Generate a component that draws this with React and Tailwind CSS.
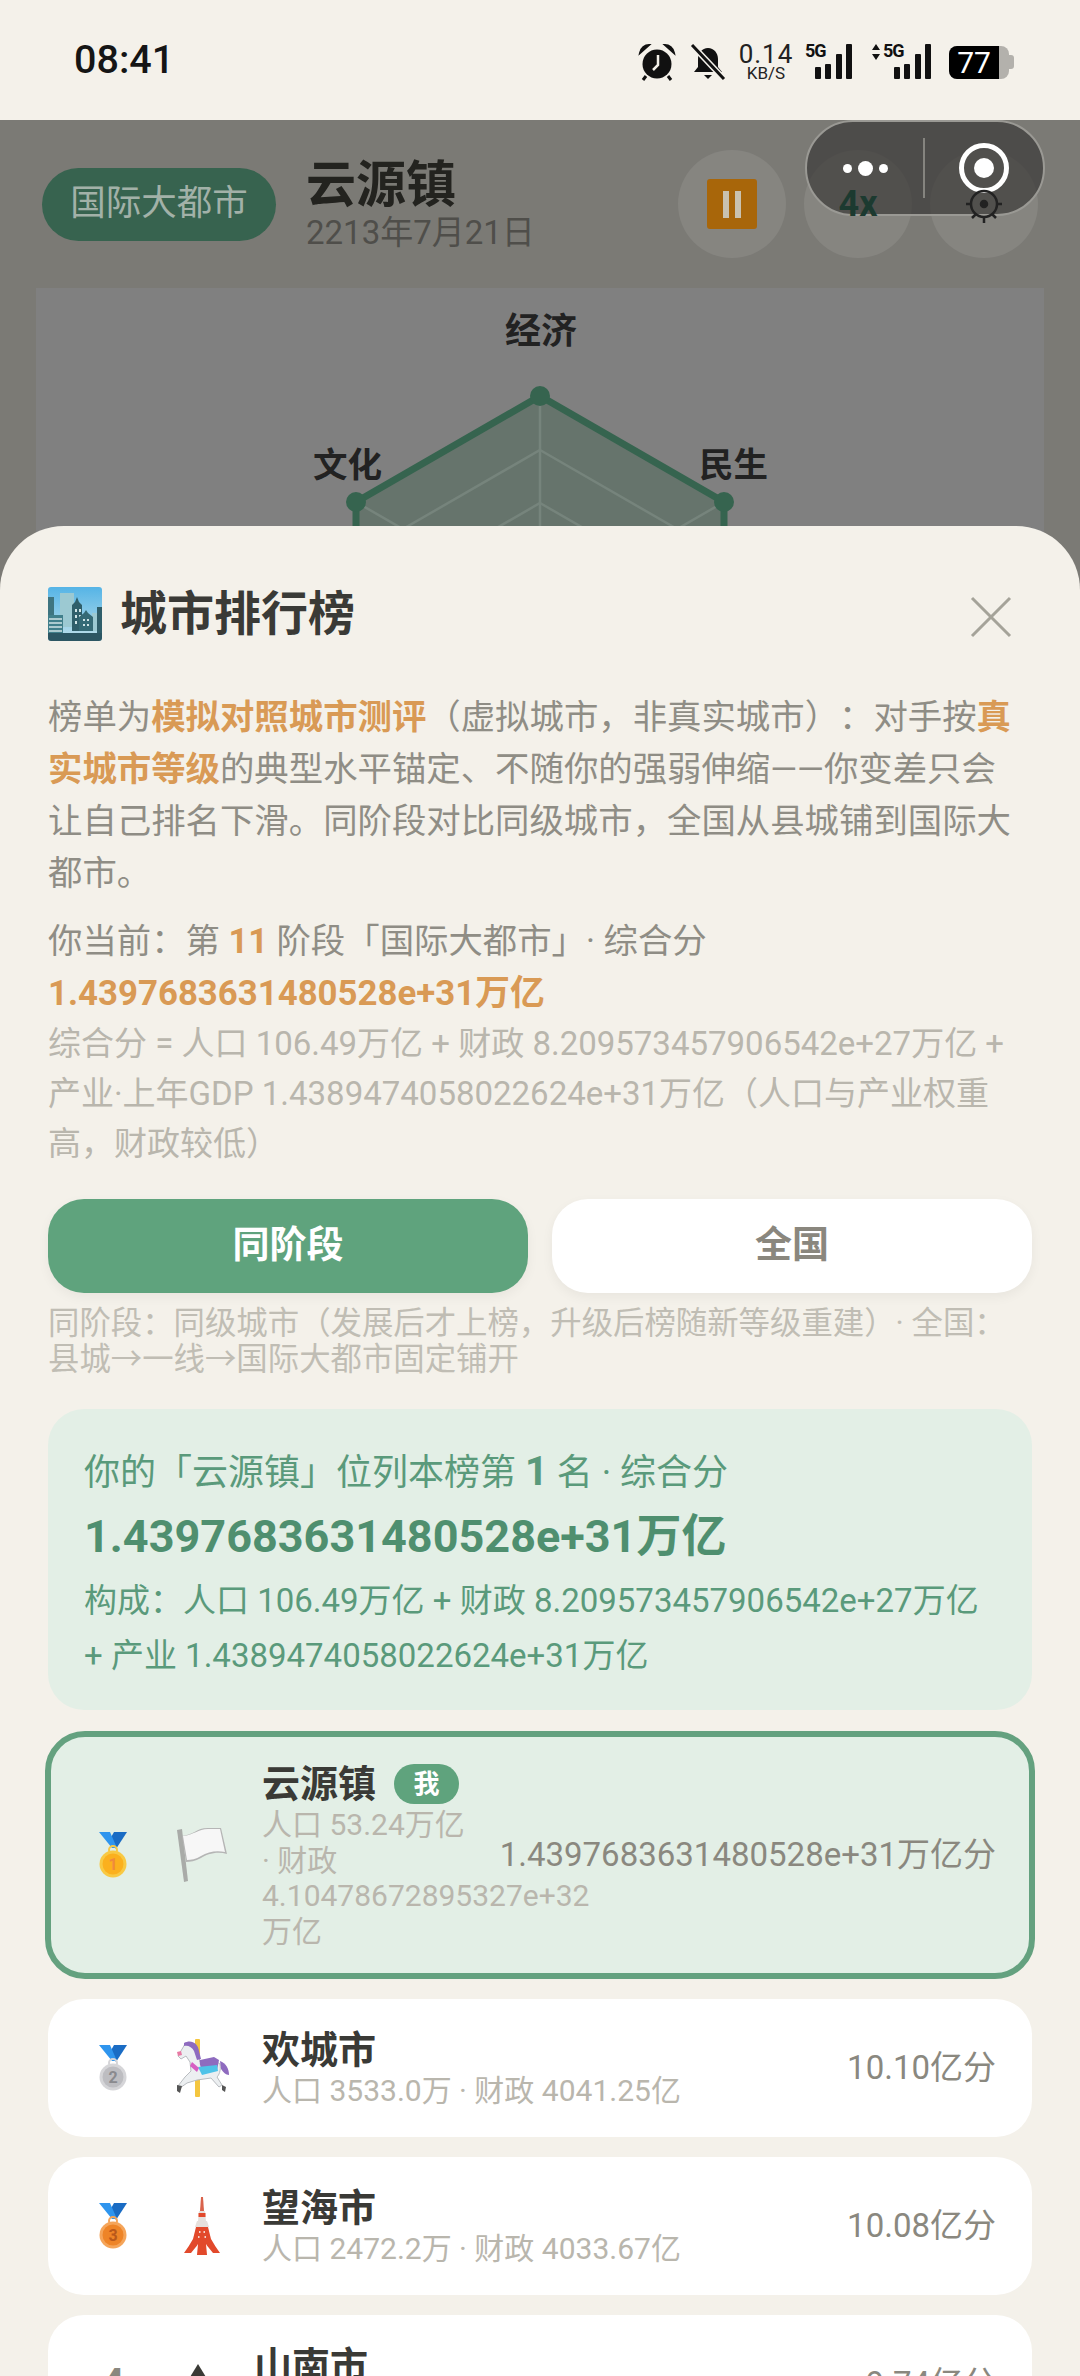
import React from 'react';

function Medal({ n, fill, edge, ink }) {
    return (
        <svg width="28" height="46" viewBox="0 0 28 46">
            <path d="M28 0H15l-4 7 6 10z" fill="#1a6cc4" />
            <path d="M0 0h11l7 16h-5z" fill="#2f95ee" />
            <circle cx="14" cy="18" r="4" fill="none" stroke={edge} strokeWidth="2" />
            <circle cx="14" cy="32" r="13.5" fill={edge} />
            <circle cx="14" cy="32" r="10.5" fill={fill} />
            <text x="14" y="38" textAnchor="middle" fontSize="16" fontWeight="700" fill={ink} fontFamily="Roboto">{n}</text>
        </svg>
    );
}

function FlagIcon() {
    return (
        <svg width="52" height="56" viewBox="0 0 52 56">
            <path d="M1 3l5-1 6 52-4 1z" fill="#a9aba8" />
            <path d="M6 9c12-1 14-8 26-8 6 0 10 0 13 0l6 26c-10-3-20 0-26 4-6 3-11 4-15 4z" fill="#b5b5b5" />
            <path d="M7 9c11-1 15-7 25-7 5 0 9 0 12 0l5 23c-9-2-17 0-24 4-5 3-10 4-14 4z" fill="#f7f7f7" />
        </svg>
    );
}

function HorseIcon() {
    return (
        <svg width="56" height="58" viewBox="0 0 56 58">
            <rect x="21" y="0" width="5" height="58" rx="1" fill="#f4c63f" />
            <path d="M11 5c6-2 12 2 13 9l2 9 14-2 6 4c1 7-1 11-3 13l5 8-3 2-8-9-14 2-10 3-7 5-2-2 7-9 6-6-1-9-4-6-5 3-3-3z" fill="#eceff1" stroke="#b9bcc0" strokeWidth="1" />
            <path d="M10 4c7-4 14 0 15 8l2 8-4 1-3-9c-2-4-6-6-10-5z" fill="#8e6bbf" />
            <path d="M26 21l14-3 5 3-2 10-13 2c-3-3-5-8-4-12z" fill="#8e6bbf" />
            <path d="M24 28l19-2 1 6-16 4z" fill="#4fc3e8" />
            <path d="M18 23l7 6-2 4-7-6z" fill="#d65fc2" />
            <path d="M46 22c6 2 9 8 9 14-3 0-6-3-8-6z" fill="#8e6bbf" />
            <path d="M3 46l5 1-2 7-3-2zM48 46l4 2-1 5-3-2z" fill="#555" />
            <path d="M3 13l4-1 1 4-4 1z" fill="#e87aa4" />
        </svg>
    );
}

function TowerIcon() {
    return (
        <svg width="36" height="58" viewBox="0 0 36 58">
            <path d="M17 0h2l1 14h-4z" fill="#d9634c" />
            <path d="M15 14h6l1 10h-8z" fill="#e6e0dc" />
            <path d="M14.500 16h7v4h-7z" fill="#e2492b" />
            <path d="M13 24h10l2 6H11z" fill="#e6e0dc" />
            <path d="M12 30h12l3 12c3 5 6 10 9 14h-7c-3-4-6-7-7-9h-8c-1 2-4 5-7 9H0c3-4 6-9 9-14z" fill="#e2492b" />
            <path d="M14 47h8l1 11h-10z" fill="#e2492b" />
            <path d="M15 34h1.500v2H15zM19.500 34H21v2h-1.500zM14 39h1.500v2H14zM20.500 39H22v2h-1.500z" fill="#f4d5cc" />
        </svg>
    );
}

function CityIcon() {
    return (
        <svg width="54" height="54" viewBox="0 0 54 54">
            <defs>
                <linearGradient id="sky" x1="0" y1="0" x2="0" y2="1">
                    <stop offset="0" stopColor="#55b4e6" />
                    <stop offset="1" stopColor="#bfe0ea" />
                </linearGradient>
            </defs>
            <rect width="54" height="54" rx="3" fill="url(#sky)" />
            <rect x="12" y="6" width="14" height="34" fill="#9cc9d2" />
            <rect x="44" y="26" width="6" height="18" fill="#9cc9d2" />
            <path d="M0 10h6v18H0z" fill="#3e7480" />
            <path d="M0 28h15v22H0z" fill="#417f8b" />
            <path d="M1 32h13M1 36h13M1 40h13M1 44h13" stroke="#cfe3e6" strokeWidth="1.500" />
            <path d="M24 44V18l3-3 2-5 2 5 3 3v26z" fill="#2f5e6a" />
            <path d="M27 22h2v3h-2zM31 22h2v3h-2zM27 28h2v3h-2zM31 28h2v3h-2zM27 34h2v3h-2zM31 34h2v3h-2z" fill="#cfe3e6" />
            <path d="M31 44V30l5-4 2-3 2 3 5 4v14z" fill="#356a76" />
            <path d="M35 32h2v2h-2zM39 32h2v2h-2zM35 37h2v2h-2zM39 37h2v2h-2z" fill="#cfe3e6" />
            <rect x="49" y="20" width="5" height="30" fill="#2f5e6a" />
            <path d="M0 46h54v5a3 3 0 0 1-3 3H3a3 3 0 0 1-3-3z" fill="#2c5663" />
        </svg>
    );
}

function StatusBar() {
    const bars = [[0, 12], [10, 15], [21, 25], [31, 35]];
    const signal = bars.map(([x, h]) => <rect key={x} x={x} y={35 - h} width="6" height={h} rx="1" fill="#111" />);
    return (
        <div className="h-[120px] shrink-0 bg-[#f4f1ea] flex items-start pt-[36px] pl-[74px] pr-[66px] justify-between">
            <span className="text-[39.500px] leading-[46px] font-medium text-[#151515] mt-[1px]">08:41</span>
            <div className="flex items-center h-[44px] pt-[8px]">
                <svg width="38" height="38" viewBox="0 0 38 38">
                    <circle cx="19" cy="21" r="14.500" fill="#111" />
                    <path d="M2 10c1-5 5-8 9-8l-9 8zM36 10c-1-5-5-8-9-8l9 8z" fill="#111" stroke="#111" strokeWidth="2" />
                    <path d="M8 33l-3 4M30 33l3 4" stroke="#111" strokeWidth="3" />
                    <path d="M20 12v10l-5 5" fill="none" stroke="#f4f1ea" strokeWidth="2.500" />
                </svg>
                <svg className="ml-[14px]" width="36" height="36" viewBox="0 0 36 36">
                    <path d="M18 4c-6 0-10 5-10 11v8l-4 5h28l-4-5v-8c0-6-4-11-10-11z" fill="#111" />
                    <path d="M14 31h8l-4 4z" fill="#111" />
                    <path d="M2 1l32 34" stroke="#f4f1ea" strokeWidth="6" />
                    <path d="M2 1l32 34" stroke="#111" strokeWidth="3" />
                </svg>
                <div className="ml-[12px] w-[56px] flex flex-col items-center text-[#222]">
                    <span className="text-[26px] leading-[22px] tracking-[1px]">0.14</span>
                    <span className="text-[17px] leading-[16px]">KB/S</span>
                </div>
                <div className="ml-[11px] relative w-[50px] h-[36px]">
                    <span className="absolute left-0 top-[-2px] text-[18px] leading-[18px] font-bold tracking-[-1px] text-[#111]">5G</span>
                    <svg className="absolute left-[10px] top-0" width="38" height="36" viewBox="0 0 38 36">{signal}</svg>
                </div>
                <div className="ml-[16px] relative w-[66px] h-[36px]">
                    <svg className="absolute left-0 top-0" width="10" height="16" viewBox="0 0 10 16">
                        <path d="M5 0l4 6H1zM5 16l-4-6h8z" fill="#111" />
                    </svg>
                    <span className="absolute left-[12px] top-[-2px] text-[18px] leading-[18px] font-bold tracking-[-1px] text-[#111]">5G</span>
                    <svg className="absolute left-[23px] top-0" width="38" height="36" viewBox="0 0 38 36">{signal}</svg>
                </div>
                <div className="ml-[12px] flex items-center">
                    <div className="w-[60px] h-[33px] rounded-[8px] bg-[#b3b1ac] overflow-hidden">
                        <div className="w-[50px] h-[33px] bg-black text-white text-[30px] leading-[33px] text-center">77</div>
                    </div>
                    <div className="w-[5px] h-[14px] rounded-r-[3px] bg-[#b3b1ac]" />
                </div>
            </div>
        </div>
    );
}

function Backdrop() {
    return (
        <div className="flex-1 bg-[#7b7a75] flex flex-col">
            <div className="h-[168px] shrink-0 flex items-center pl-[42px] pr-[42px]">
                <div className="w-[234px] h-[73px] rounded-full bg-[#37634f] text-[#a2b1a8] text-[35.500px] flex items-center justify-center">国际大都市</div>
                <div className="ml-[30px] flex flex-col">
                    <span className="text-[50px] leading-[56px] font-bold text-[#23231f]">云源镇</span>
                    <span className="mt-[2px] text-[33px] leading-[36px] text-[#4f4e4a]">2213年7月21日</span>
                </div>
                <div className="ml-auto flex gap-[18px]">
                    <div className="w-[108px] h-[108px] rounded-full bg-[#868580] flex items-center justify-center">
                        <div className="w-[50px] h-[50px] rounded-[3px] bg-[#a8660a] flex items-center justify-center gap-[6px]">
                            <div className="w-[6px] h-[27px] bg-[#c9c2b0]" />
                            <div className="w-[6px] h-[27px] bg-[#c9c2b0]" />
                        </div>
                    </div>
                    <div className="w-[108px] h-[108px] rounded-full bg-[#868580] flex items-center justify-center">
                        <span className="relative z-10 text-[36px] font-bold text-[#1c3a30]">4x</span>
                    </div>
                    <div className="w-[108px] h-[108px] rounded-full bg-[#868580] flex items-center justify-center">
                        <svg className="relative z-10" width="40" height="40" viewBox="0 0 40 40" fill="none" stroke="#222" strokeWidth="2.500">
                            <circle cx="20" cy="20" r="13" />
                            <circle cx="20" cy="20" r="3" fill="#222" />
                            <path d="M20 34v5M2 20h5M33 20h5M28 30l4 4M12 30l-4 4" />
                        </svg>
                    </div>
                </div>
            </div>
            <div className="mx-[36px] flex-1 bg-[#808080] relative overflow-hidden">
                <svg className="absolute left-[-36px] top-[-288px]" width="1080" height="720" viewBox="0 0 1080 720">
                    <path d="M540 396L724 502V714L540 820L356 714V502Z" fill="#66746c" stroke="#36644f" strokeWidth="7" />
                    <path d="M540 450L677 529V687L540 766L403 687V529Z M540 503L632 556V660L540 713L448 660V556Z" fill="none" stroke="#76847c" strokeWidth="2.500" />
                    <path d="M540 396V608M356 502L540 608M724 502L540 608" stroke="#76847c" strokeWidth="2.500" />
                    <circle cx="540" cy="396" r="10" fill="#36644f" />
                    <circle cx="356" cy="502" r="10" fill="#36644f" />
                    <circle cx="724" cy="502" r="10" fill="#36644f" />
                </svg>
                <span className="absolute left-[469px] top-[24px] text-[36px] leading-[40px] font-bold text-[#222]">经济</span>
                <span className="absolute left-[277px] top-[157px] text-[34.500px] leading-[40px] font-bold text-[#222]">文化</span>
                <span className="absolute left-[663px] top-[157px] text-[34.500px] leading-[40px] font-bold text-[#222]">民生</span>
            </div>
        </div>
    );
}

function Capsule() {
    return (
        <div className="absolute left-[805px] top-[120px] w-[240px] h-[96px] rounded-full bg-[#3a3937]/70 border-2 border-[#9a9994] flex items-center">
            <div className="w-[116px] flex items-center justify-center gap-[6px]">
                <div className="w-[9px] h-[9px] rounded-full bg-white" />
                <div className="w-[15px] h-[15px] rounded-full bg-white" />
                <div className="w-[9px] h-[9px] rounded-full bg-white" />
            </div>
            <div className="w-[2px] h-[60px] bg-[#85847f]" />
            <div className="flex-1 flex items-center justify-center">
                <div className="w-[50px] h-[50px] rounded-full border-[5px] border-white flex items-center justify-center">
                    <div className="w-[20px] h-[20px] rounded-full bg-white" />
                </div>
            </div>
        </div>
    );
}

function Rank({ icon, rank, art, name, sub, score, me, tight }) {
    let box = "flex items-center gap-[30px] rounded-[36px] bg-white px-[36px] h-[138px] shrink-0";
    if (me) box = "mx-[-3px] flex items-center gap-[30px] rounded-[40px] border-[6px] border-[#64a17f] bg-[#e3efe6] px-[33px] py-[24px]";
    if (tight) box = "flex items-center gap-[26px] rounded-[36px] bg-white px-[36px] h-[138px] shrink-0";
    return (
        <div className={box}>
            <div className="w-[58px] shrink-0 flex justify-center">{icon || rank}</div>
            <div className="w-[60px] shrink-0 flex justify-center">{art}</div>
            <div className="flex-1 min-w-0">
                <div className="flex items-center gap-[18px] text-[38px] leading-[46px] font-bold text-[#3a3a36]">
                    {name}
                    {me && <span className="w-[65px] h-[40px] rounded-full bg-[#5fa37d] text-white text-[26px] leading-[40px] text-center">我</span>}
                </div>
                <div className="text-[30px] leading-[35.500px] text-[#b9b6ad]">{sub}</div>
            </div>
            <div className="shrink-0 text-[33px] leading-[40px] text-[#8a887f]">{score}</div>
        </div>
    );
}

export default function App() {
    return (
        <div className="relative h-[2376px] w-[1080px] overflow-hidden flex flex-col font-['Roboto','Noto_Sans_CJK_SC',sans-serif] [text-spacing-trim:space-all]">
            <StatusBar />
            <Backdrop />
            <Capsule />
            <div className="absolute z-20 left-0 right-0 top-[526px] bottom-0 rounded-t-[64px] bg-[#f4f1ea] px-[48px] overflow-hidden">
                <div className="mt-[57px] flex items-center h-[62px]">
                    <CityIcon />
                    <span className="ml-[18px] text-[47px] leading-[62px] font-bold text-[#3a3a36]">城市排行榜</span>
                    <svg className="ml-auto mr-[20px] mt-[6px]" width="42" height="42" viewBox="0 0 42 42" fill="none" stroke="#a5a399" strokeWidth="3">
                        <path d="M2 2l38 38M40 2L2 40" />
                    </svg>
                </div>
                <p className="mt-[46px] pr-[10px] text-[34.400px] leading-[52px] text-[#8f8d85]">
                    榜单为<b className="text-[#d99a55]">模拟对照城市测评</b>（虚拟城市，非真实城市）：对手按<b className="text-[#d99a55]">真实城市等级</b>的典型水平锚定、不随你的强弱伸缩——你变差只会让自己排名下滑。同阶段对比同级城市，全国从县城铺到国际大都市。
                </p>
                <p className="mt-[16px] text-[34.400px] leading-[52px] text-[#8f8d85]">
                    你当前：第 <b className="text-[#d99a55]">11</b> 阶段「国际大都市」· 综合分
                    <br />
                    <b className="text-[34.800px] text-[#d99a55]">1.4397683631480528e+31万亿</b>
                </p>
                <p className="text-[33px] leading-[50px] text-[#b9b6ad]">
                    综合分 = 人口 106.49万亿 + 财政 8.209573457906542e+27万亿 + 产业·上年GDP 1.4389474058022624e+31万亿（人口与产业权重高，财政较低）
                </p>
                <div className="mt-[30px] flex gap-[24px]">
                    <div className="flex-1 h-[94px] rounded-[36px] bg-[#5fa37d] text-white text-[37px] font-bold flex items-center justify-center shadow-[0_4px_12px_rgba(0,0,0,0.05)]">同阶段</div>
                    <div className="flex-1 h-[94px] rounded-[36px] bg-white text-[#8a877e] text-[37px] font-bold flex items-center justify-center shadow-[0_4px_12px_rgba(0,0,0,0.05)]">全国</div>
                </div>
                <p className="mt-[13px] text-[31.400px] leading-[36px] text-[#c0bdb4]">
                    同阶段：同级城市（发展后才上榜，升级后榜随新等级重建）· 全国：
                    <br />
                    县城→一线→国际大都市固定铺开
                </p>
                <div className="mt-[31px] h-[301px] rounded-[36px] bg-[#e3efe6] px-[36px] pt-[36px]">
                    <div className="text-[36px] leading-[54px] text-[#5a9a7b]">你的「云源镇」位列本榜第 <b className="text-[40px]">1</b> 名 · 综合分</div>
                    <div className="mt-[7px] text-[45px] leading-[60px] font-bold text-[#4f8f6f]">1.4397683631480528e+31万亿</div>
                    <div className="mt-[6px] text-[33px] leading-[55px] text-[#5a9a7b]">构成：人口 106.49万亿 + 财政 8.209573457906542e+27万亿 + 产业 1.4389474058022624e+31万亿</div>
                </div>
                <div className="mt-[21px] flex flex-col gap-[20px]">
                    <Rank me icon={<Medal n="1" fill="#fbb01e" edge="#f8c944" ink="#f08a3c" />} art={<FlagIcon />} name="云源镇" sub="人口 53.24万亿 · 财政 4.10478672895327e+32万亿" score="1.4397683631480528e+31万亿分" />
                    <Rank icon={<Medal n="2" fill="#bdbdc1" edge="#d5d5d8" ink="#8a8a8e" />} art={<HorseIcon />} name="欢城市" sub="人口 3533.0万 · 财政 4041.25亿" score="10.10亿分" />
                    <Rank icon={<Medal n="3" fill="#ee8427" edge="#f5a55a" ink="#b9581a" />} art={<TowerIcon />} name="望海市" sub="人口 2472.2万 · 财政 4033.67亿" score="10.08亿分" />
                    <Rank tight rank={<span className="text-[40px] font-bold text-[#8a887f]">4</span>} art={<svg width="48" height="48" viewBox="0 0 48 48"><path d="M24 4L46 40H2z" fill="#3a3a36" /></svg>} name="山南市" sub="人口 2100.5万 · 财政 3900.12亿" score="9.74亿分" />
                </div>
            </div>
        </div>
    );
}
